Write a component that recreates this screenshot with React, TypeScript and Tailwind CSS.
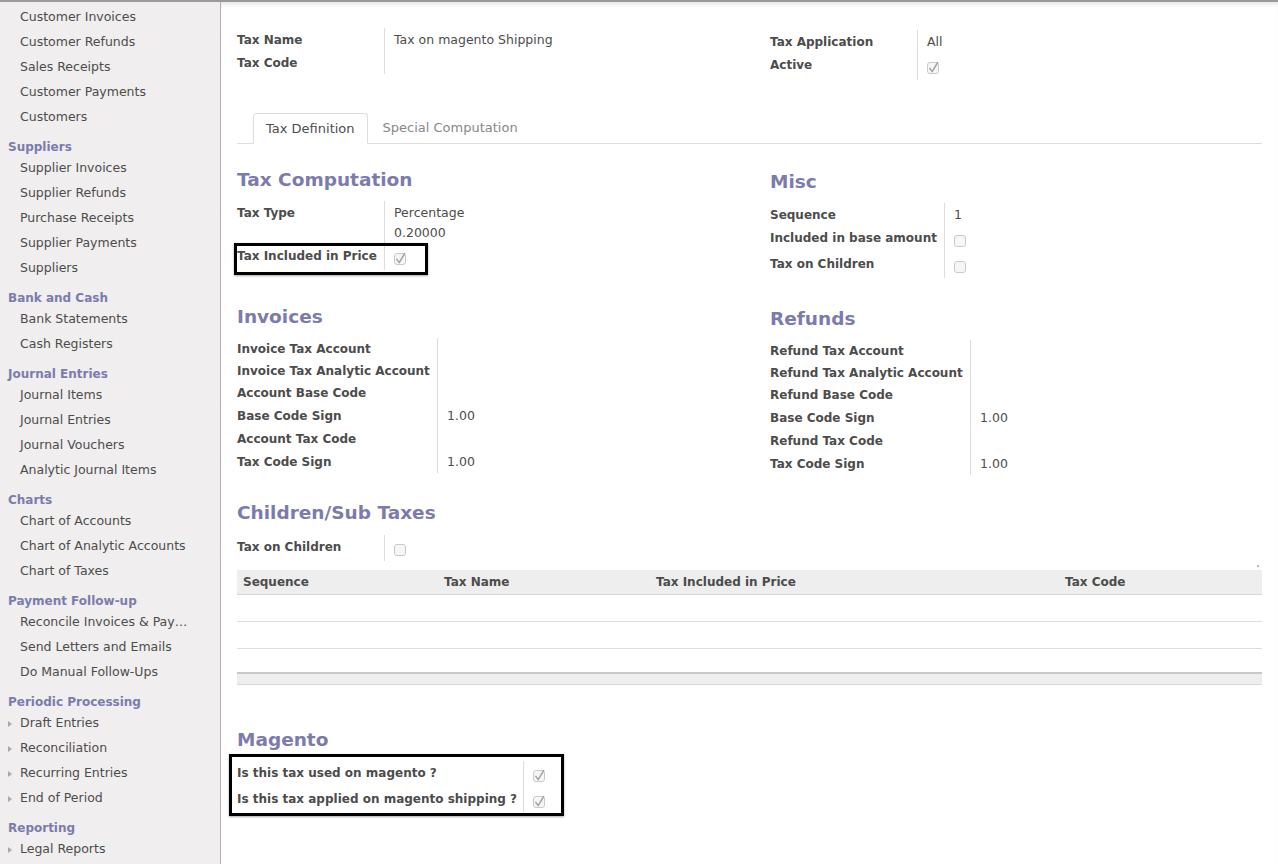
import React from "react";

const LABEL = "text-[12px] font-bold text-[#4c4c4c] leading-[16px] whitespace-nowrap";
const VAL = "text-[12.5px] text-[#4c4c4c] leading-[16px] whitespace-nowrap";

function Checkbox({ checked }: { checked?: boolean }) {
  return (
    <svg width="14" height="14" viewBox="0 0 14 14" className="block">
      <rect x="1.5" y="1.5" width="11" height="11" rx="2.5" fill="#f6f6f6" stroke="#c9c9c9" />
      {checked && (
        <path
          d="M3.8 7.4 L6.2 10.6 L11.6 1.6"
          stroke="#a2a2a2"
          strokeWidth="1.5"
          fill="none"
          strokeLinecap="round"
          strokeLinejoin="round"
        />
      )}
    </svg>
  );
}

function TextRow({ label, lw, h, value }: { label: string; lw: string; h: string; value?: string }) {
  return (
    <div className={`flex ${h}`}>
      <div className={`${lw} shrink-0 border-r border-[#dcdcdc] flex items-center`}>
        <span className={LABEL}>{label}</span>
      </div>
      <div className="flex items-center pl-[9px]">
        {value && <span className={VAL}>{value}</span>}
      </div>
    </div>
  );
}

function CheckRow({ label, lw, h, checked }: { label: string; lw: string; h: string; checked?: boolean }) {
  return (
    <div className={`flex ${h}`}>
      <div className={`${lw} shrink-0 border-r border-[#dcdcdc] pt-[4px] ${LABEL}`}>{label}</div>
      <div className="pl-[8px] pt-[8px]">
        <Checkbox checked={checked} />
      </div>
    </div>
  );
}

function Heading({ children }: { children: React.ReactNode }) {
  return <h2 className="h-[24px] leading-[24px] text-[18.5px] font-bold text-[#7c7bad] whitespace-nowrap">{children}</h2>;
}

const sections: { title?: string; arrow?: boolean; items: string[] }[] = [
  { items: ["Customer Invoices", "Customer Refunds", "Sales Receipts", "Customer Payments", "Customers"] },
  { title: "Suppliers", items: ["Supplier Invoices", "Supplier Refunds", "Purchase Receipts", "Supplier Payments", "Suppliers"] },
  { title: "Bank and Cash", items: ["Bank Statements", "Cash Registers"] },
  { title: "Journal Entries", items: ["Journal Items", "Journal Entries", "Journal Vouchers", "Analytic Journal Items"] },
  { title: "Charts", items: ["Chart of Accounts", "Chart of Analytic Accounts", "Chart of Taxes"] },
  { title: "Payment Follow-up", items: ["Reconcile Invoices & Pay…", "Send Letters and Emails", "Do Manual Follow-Ups"] },
  { title: "Periodic Processing", arrow: true, items: ["Draft Entries", "Reconciliation", "Recurring Entries", "End of Period"] },
  { title: "Reporting", arrow: true, items: ["Legal Reports"] },
];

function Sidebar() {
  return (
    <div className="w-[221px] shrink-0 bg-[#f0eeee] border-r border-[#afafb6] pt-[3px] overflow-hidden">
      {sections.map((s, i) => (
        <div key={i}>
          {s.title && (
            <div className="h-[26px] pt-[9px] pl-[8px] leading-[17px] text-[12px] font-bold text-[#7c7bad] whitespace-nowrap">
              {s.title}
            </div>
          )}
          {s.items.map((it) => (
            <div key={it} className="h-[25px] flex items-center pl-[8px] text-[12.5px] text-[#4c4c4c] whitespace-nowrap">
              <div className="w-[12px] shrink-0">
                {s.arrow && (
                  <div className="w-0 h-0 border-l-[4px] border-l-[#a8a8a8] border-y-[3.5px] border-y-transparent" />
                )}
              </div>
              <span>{it}</span>
            </div>
          ))}
        </div>
      ))}
    </div>
  );
}

export default function App() {
  return (
    <div className="h-screen w-full flex flex-col overflow-hidden bg-white font-['DejaVu_Sans',sans-serif]">
      <div className="h-[2px] shrink-0 bg-[#9a9a9a]" />
      <div className="flex flex-1 min-h-0">
        <Sidebar />
        <div className="flex-1 min-w-0 px-[16px] pt-[26px] shadow-[inset_0_5px_7px_-5px_rgba(0,0,0,0.18)]">
          {/* header fields */}
          <div className="grid grid-cols-[533px_1fr]">
            <div>
              <TextRow label="Tax Name" lw="w-[148px]" h="h-[24px]" value="Tax on magento Shipping" />
              <TextRow label="Tax Code" lw="w-[148px]" h="h-[22px]" />
            </div>
            <div className="pt-[2px]">
              <TextRow label="Tax Application" lw="w-[148px]" h="h-[23px]" value="All" />
              <CheckRow label="Active" lw="w-[148px]" h="h-[27px]" checked />
            </div>
          </div>

          {/* tabs */}
          <div className="mt-[32px] flex items-end border-b border-[#dddddd] pl-[16px]">
            <div className="h-[31px] -mb-px flex items-center px-[12px] border border-[#dddddd] border-b-white rounded-t-[4px] bg-white text-[13px] text-[#4c4c4c] whitespace-nowrap">
              Tax Definition
            </div>
            <div className="h-[31px] flex items-center ml-[1px] px-[14px] text-[13px] text-[#888888] whitespace-nowrap">
              Special Computation
            </div>
          </div>

          {/* section 1 */}
          <div className="mt-[24px] grid grid-cols-[533px_1fr]">
            <div>
              <Heading>Tax Computation</Heading>
              <div className="mt-[9px]">
                <div className="flex h-[43px]">
                  <div className={`w-[148px] shrink-0 border-r border-[#dcdcdc] pt-[4px] ${LABEL}`}>Tax Type</div>
                  <div className="pl-[9px] pt-[2px] text-[12.5px] text-[#4c4c4c] leading-[20px]">
                    <div>Percentage</div>
                    <div>0.20000</div>
                  </div>
                </div>
                <div className="relative">
                  <CheckRow label="Tax Included in Price" lw="w-[148px]" h="h-[26px]" checked />
                  <div className="absolute left-[-3px] top-[-1px] w-[194px] h-[32px] border-[3px] border-black shadow-[0_1px_2px_rgba(0,0,0,0.35)] pointer-events-none" />
                </div>
              </div>
            </div>
            <div className="pt-[2px]">
              <Heading>Misc</Heading>
              <div className="mt-[9px]">
                <TextRow label="Sequence" lw="w-[175px]" h="h-[23px]" value="1" />
                <CheckRow label="Included in base amount" lw="w-[175px]" h="h-[26px]" />
                <CheckRow label="Tax on Children" lw="w-[175px]" h="h-[26px]" />
              </div>
            </div>
          </div>

          {/* section 2 */}
          <div className="mt-[27px] grid grid-cols-[533px_1fr]">
            <div>
              <Heading>Invoices</Heading>
              <div className="mt-[9px]">
                <TextRow label="Invoice Tax Account" lw="w-[201px]" h="h-[22px]" />
                <TextRow label="Invoice Tax Analytic Account" lw="w-[201px]" h="h-[22px]" />
                <TextRow label="Account Base Code" lw="w-[201px]" h="h-[22px]" />
                <TextRow label="Base Code Sign" lw="w-[201px]" h="h-[23px]" value="1.00" />
                <TextRow label="Account Tax Code" lw="w-[201px]" h="h-[23px]" />
                <TextRow label="Tax Code Sign" lw="w-[201px]" h="h-[23px]" value="1.00" />
              </div>
            </div>
            <div className="pt-[2px]">
              <Heading>Refunds</Heading>
              <div className="mt-[9px]">
                <TextRow label="Refund Tax Account" lw="w-[201px]" h="h-[22px]" />
                <TextRow label="Refund Tax Analytic Account" lw="w-[201px]" h="h-[22px]" />
                <TextRow label="Refund Base Code" lw="w-[201px]" h="h-[22px]" />
                <TextRow label="Base Code Sign" lw="w-[201px]" h="h-[23px]" value="1.00" />
                <TextRow label="Refund Tax Code" lw="w-[201px]" h="h-[23px]" />
                <TextRow label="Tax Code Sign" lw="w-[201px]" h="h-[23px]" value="1.00" />
              </div>
            </div>
          </div>

          {/* section 3 */}
          <div className="mt-[26px]">
            <Heading>Children/Sub Taxes</Heading>
            <div className="mt-[10px]">
              <CheckRow label="Tax on Children" lw="w-[148px]" h="h-[26px]" />
            </div>
            <div className="h-[9px] flex justify-end items-center pr-[3px]">
              <div className="w-[2px] h-[2px] bg-[#bbbbbb]" />
            </div>
            <table className="w-full table-fixed border-collapse">
              <colgroup>
                <col className="w-[201px]" />
                <col className="w-[212px]" />
                <col className="w-[409px]" />
                <col />
              </colgroup>
              <thead>
                <tr className="h-[24px] bg-[#eeeeee]">
                  {["Sequence", "Tax Name", "Tax Included in Price", "Tax Code"].map((h) => (
                    <th key={h} className={`${LABEL} text-left pl-[6px] border-b border-[#d6d6d6]`}>
                      {h}
                    </th>
                  ))}
                </tr>
              </thead>
              <tbody>
                <tr className="h-[27px]">
                  <td colSpan={4} className="border-b border-[#dddddd]" />
                </tr>
                <tr className="h-[27px]">
                  <td colSpan={4} className="border-b border-[#dddddd]" />
                </tr>
                <tr className="h-[25px]">
                  <td colSpan={4} />
                </tr>
                <tr className="h-[11px]">
                  <td colSpan={4} className="bg-[#eeeeee] border-t-2 border-t-[#c8c8c8] border-b border-b-[#d8d8d8]" />
                </tr>
              </tbody>
            </table>
          </div>

          {/* section 4 */}
          <div className="mt-[43px]">
            <Heading>Magento</Heading>
            <div className="mt-[9px] relative">
              <CheckRow label="Is this tax used on magento ?" lw="w-[287px]" h="h-[26px]" checked />
              <CheckRow label="Is this tax applied on magento shipping ?" lw="w-[287px]" h="h-[26px]" checked />
              <div className="absolute left-[-8px] top-[-7px] w-[335px] h-[62px] border-[3px] border-black shadow-[0_1px_2px_rgba(0,0,0,0.35)] pointer-events-none" />
            </div>
          </div>
        </div>
      </div>
    </div>
  );
}
